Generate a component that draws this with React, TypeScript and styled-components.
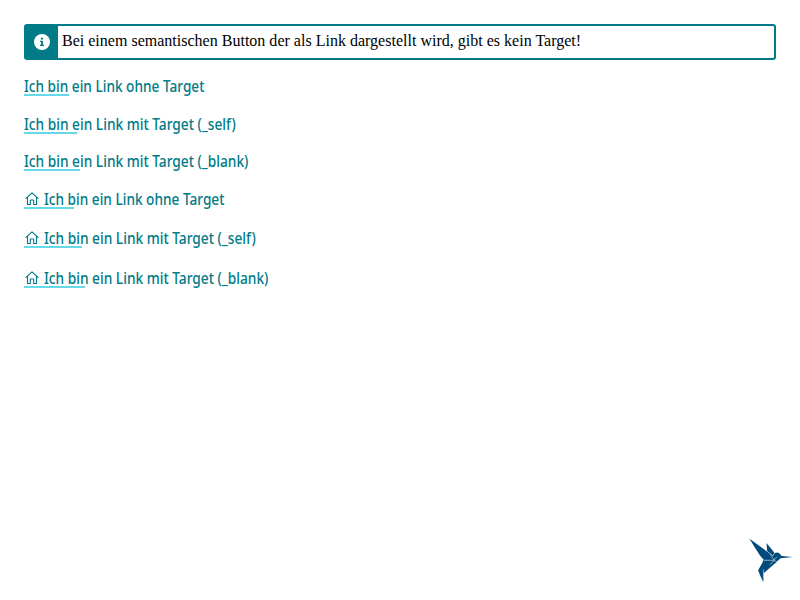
import React from 'react';
import styled, { createGlobalStyle } from 'styled-components';

const GlobalStyle = createGlobalStyle`
  * { box-sizing: border-box; }
  body { margin: 0; background: #fff; }
`;

const Page = styled.main`
  display: flex;
  flex-direction: column;
  height: 600px;
  padding: 24px 24px 0;
`;

const Notice = styled.section`
  display: flex;
  height: 36px;
  flex: none;
  border: 2px solid #007b87;
  border-radius: 3px;
`;

const NoticeIcon = styled.div`
  display: flex;
  align-items: center;
  justify-content: center;
  width: 32px;
  background: #007b87;
`;

const NoticeText = styled.p`
  margin: 0;
  padding: 0 4px;
  color: #000;
  font: 16px/30px 'Liberation Serif', serif;
  letter-spacing: 0.01px;
  white-space: nowrap;
`;

const LinkList = styled.nav`
  display: flex;
  flex-direction: column;
  align-items: flex-start;
  padding-top: 16px;
`;

const TextLink = styled.a<{ $width: number; $gap: number }>`
  display: flex;
  align-items: center;
  gap: 4px;
  width: ${({ $width }) => $width}px;
  height: 20px;
  margin-bottom: ${({ $gap }) => $gap}px;
  background: linear-gradient(#66d9e8, #66d9e8) left bottom / 25% 2px no-repeat;
  color: #007b87;
  text-decoration: none;

  svg { flex: none; }
`;

const LinkLabel = styled.span<{ $scale: number }>`
  flex: none;
  font: 500 16px/20px 'Noto Sans', sans-serif;
  transform: scaleX(${({ $scale }) => $scale});
  transform-origin: left center;
  white-space: nowrap;
`;

const Corner = styled.footer`
  display: flex;
  justify-content: flex-end;
  margin-top: auto;
  margin-right: -18px;
  padding-bottom: 17px;
`;

const InfoIcon = () => (
  <svg width="16" height="16" viewBox="0 0 16 16">
    <circle cx="8" cy="8" r="8" fill="#fff" />
    <circle cx="7.9" cy="4.7" r="1.15" fill="#007b87" />
    <path d="M6 6.8h2.9v4h1.1V12H6v-1.2h1.1V8H6z" fill="#007b87" />
  </svg>
);

const HouseIcon = () => (
  <svg width="16" height="16" viewBox="0 0 16 16" fill="none" stroke="#007b87" strokeWidth="1.1" strokeLinejoin="round" strokeLinecap="round">
    <path d="M2 7.4 8 1.8l6 5.6M3.5 6.3v7.2h2.8V9.6q0-.6.6-.6h2.2q.6 0 .6.6v3.9h2.8V6.3" />
  </svg>
);

const Hummingbird = () => (
  <svg width="45" height="45" viewBox="749 538 45 45" fill="#004b7c">
    <path d="M749.2 538.4 773 556l-1.5 4.2H764l-4.2-5z" />
    <path d="m766.5 543 7.9 9.7-1.6 2.7-5.7-4.3z" />
    <path d="m773 556 1.8-3 2.6-.5q2.4.2 4.2 3.4l11.2 1.1-12.4 1.3-4.4 4.2-4 1-8-3.2z" />
    <path d="M763.2 560.2h11.3l2 1.8-12.8 11.2-.4 8.7-2.9-6-2.3-5.6 4.6-8z" />
    <path d="M764 560.3h9.8l3.7 2M770 553.8l4 6.3 3-3.4M774 560.3l-3.8 4.4M763.4 569.5V578" fill="none" stroke="#dce8f0" strokeWidth=".6" />
  </svg>
);

const links = [
  { text: 'Ich bin ein Link ohne Target', width: 180, gap: 18, scale: 0.852 },
  { text: 'Ich bin ein Link mit Target (_self)', width: 213, gap: 17, scale: 0.857 },
  { text: 'Ich bin ein Link mit Target (_blank)', width: 225, gap: 18, scale: 0.857 },
  { text: 'Ich bin ein Link ohne Target', width: 200, gap: 19, scale: 0.852, icon: true },
  { text: 'Ich bin ein Link mit Target (_self)', width: 233, gap: 20, scale: 0.857, icon: true },
  { text: 'Ich bin ein Link mit Target (_blank)', width: 245, gap: 0, scale: 0.857, icon: true },
];

export default function App() {
  return (
    <>
      <GlobalStyle />
      <Page>
        <Notice>
          <NoticeIcon><InfoIcon /></NoticeIcon>
          <NoticeText>Bei einem semantischen Button der als Link dargestellt wird, gibt es kein Target!</NoticeText>
        </Notice>
        <LinkList>
          {links.map((link, index) => (
            <TextLink key={index} href="#" $width={link.width} $gap={link.gap}>
              {link.icon && <HouseIcon />}
              <LinkLabel $scale={link.scale}>{link.text}</LinkLabel>
            </TextLink>
          ))}
        </LinkList>
        <Corner><Hummingbird /></Corner>
      </Page>
    </>
  );
}
